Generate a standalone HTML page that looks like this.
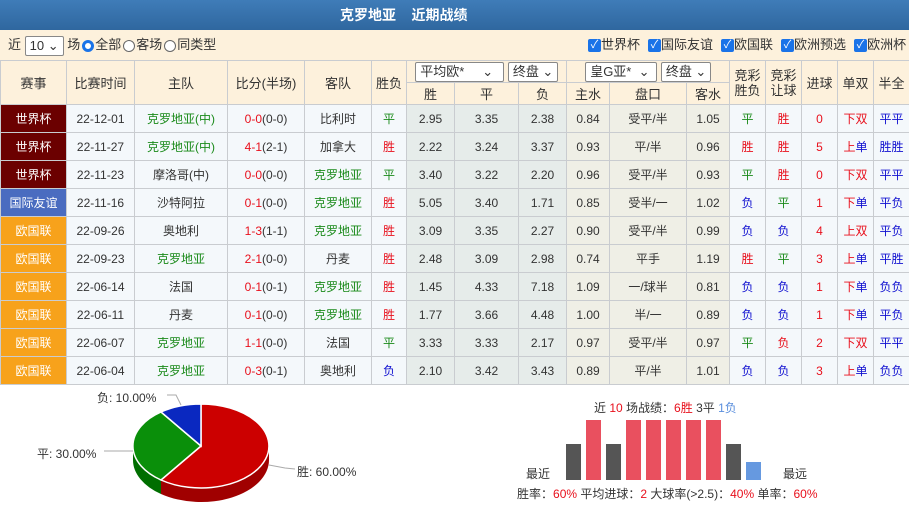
<!DOCTYPE html>
<html><head><meta charset="utf-8"><style>
*{margin:0;padding:0;box-sizing:border-box}
body{width:909px;height:510px;overflow:hidden;background:#fff;font-family:"Liberation Sans","Noto Sans CJK SC",sans-serif;font-size:12px;color:#333;position:relative}
.title{height:30px;background:linear-gradient(#3f7cb8,#2f679f);color:#fff;font-weight:bold;font-size:14px;line-height:30px;padding-left:340px;word-spacing:0}
.filter{height:30px;background:#fdf1dc;line-height:30px;padding-left:8px;font-size:13px;position:relative}
.sel{display:inline-block;border:1px solid #888;border-radius:2px;background:#fff;height:20px;line-height:18px;padding:0 4px;vertical-align:middle;font-size:13px}
.rad{display:inline-block;width:12px;height:12px;border:1px solid #666;border-radius:50%;vertical-align:middle;margin:0 1px 0 2px;background:#fff}
.rad.on{border:3px solid #1a73e8;background:#fff}
.cb{display:inline-block;width:13px;height:13px;background:#1a73e8;border-radius:2px;color:#fff;font-size:11px;line-height:13px;text-align:center;vertical-align:middle;margin-left:8px}
table{position:absolute;left:0;top:60px;border-collapse:collapse;table-layout:fixed;width:909px}
td{border:1px solid #c9ccd0;text-align:center;height:28px;font-size:12px;white-space:nowrap;overflow:hidden}
tr.h td{background:#fdf1dc;height:22px;font-size:13px;color:#333}
tr.d td{background:#f4f8fb}
td.o{background:#e6ecea!important}
td.a{background:#efefe6!important}
.wc{background:#6b0000!important;color:#fff}
.fr{background:#4a6cc0!important;color:#fff}
.ne{background:#f7a21b!important;color:#fff}
.g{color:#1a8a1a}.r{color:#e8101c}.b{color:#1010d0}
.hs{display:inline-block;border:1px solid #888;background:#fff;height:20px;line-height:18px;font-size:13px;text-align:left;padding-left:4px;border-radius:2px;vertical-align:middle}
.t{position:absolute;font-size:12px;color:#333;white-space:nowrap}
.bar{position:absolute;width:15px}
</style></head><body>
<div class="title">克罗地亚&nbsp;&nbsp;&nbsp;&nbsp;近期战绩</div>
<div class="filter">近 <span class="sel">10 ⌄</span> 场<span class="rad on"></span>全部<span class="rad"></span>客场<span class="rad"></span>同类型
<span style="position:absolute;left:580px;top:0"><span class="cb">✓</span>世界杯<span class="cb">✓</span>国际友谊<span class="cb">✓</span>欧国联<span class="cb">✓</span>欧洲预选<span class="cb">✓</span>欧洲杯</span></div>
<table>
<colgroup><col style="width:66px"><col style="width:68px"><col style="width:93px"><col style="width:77px"><col style="width:67px"><col style="width:35px"><col style="width:48px"><col style="width:64px"><col style="width:48px"><col style="width:43px"><col style="width:77px"><col style="width:43px"><col style="width:36px"><col style="width:36px"><col style="width:36px"><col style="width:36px"><col style="width:36px"></colgroup>
<tr class="h"><td rowspan="2">赛事</td><td rowspan="2">比赛时间</td><td rowspan="2">主队</td><td rowspan="2">比分(半场)</td><td rowspan="2">客队</td><td rowspan="2">胜负</td><td colspan="3"><span class="hs" style="width:89px">平均欧* &nbsp;&nbsp;&nbsp;&nbsp;⌄</span> <span class="hs" style="width:50px">终盘 ⌄</span></td><td colspan="3"><span class="hs" style="width:72px">皇G亚* &nbsp;⌄</span> <span class="hs" style="width:50px">终盘 ⌄</span></td><td rowspan="2" style="line-height:15px">竞彩<br>胜负</td><td rowspan="2" style="line-height:15px">竞彩<br>让球</td><td rowspan="2">进球</td><td rowspan="2">单双</td><td rowspan="2">半全</td></tr>
<tr class="h"><td>胜</td><td>平</td><td>负</td><td>主水</td><td>盘口</td><td>客水</td></tr>
<tr class="d"><td class="wc">世界杯</td><td>22-12-01</td><td class="g">克罗地亚(中)</td><td><span class="r">0-0</span>(0-0)</td><td>比利时</td><td class="g">平</td><td class="o">2.95</td><td class="o">3.35</td><td class="o">2.38</td><td class="a">0.84</td><td class="a">受平/半</td><td class="a">1.05</td><td class="g">平</td><td class="r">胜</td><td class="r">0</td><td class="r">下双</td><td class="b">平平</td></tr>
<tr class="d"><td class="wc">世界杯</td><td>22-11-27</td><td class="g">克罗地亚(中)</td><td><span class="r">4-1</span>(2-1)</td><td>加拿大</td><td class="r">胜</td><td class="o">2.22</td><td class="o">3.24</td><td class="o">3.37</td><td class="a">0.93</td><td class="a">平/半</td><td class="a">0.96</td><td class="r">胜</td><td class="r">胜</td><td class="r">5</td><td><span class="r">上</span><span class="b">单</span></td><td class="b">胜胜</td></tr>
<tr class="d"><td class="wc">世界杯</td><td>22-11-23</td><td>摩洛哥(中)</td><td><span class="r">0-0</span>(0-0)</td><td class="g">克罗地亚</td><td class="g">平</td><td class="o">3.40</td><td class="o">3.22</td><td class="o">2.20</td><td class="a">0.96</td><td class="a">受平/半</td><td class="a">0.93</td><td class="g">平</td><td class="r">胜</td><td class="r">0</td><td class="r">下双</td><td class="b">平平</td></tr>
<tr class="d"><td class="fr">国际友谊</td><td>22-11-16</td><td>沙特阿拉</td><td><span class="r">0-1</span>(0-0)</td><td class="g">克罗地亚</td><td class="r">胜</td><td class="o">5.05</td><td class="o">3.40</td><td class="o">1.71</td><td class="a">0.85</td><td class="a">受半/一</td><td class="a">1.02</td><td class="b">负</td><td class="g">平</td><td class="r">1</td><td><span class="r">下</span><span class="b">单</span></td><td class="b">平负</td></tr>
<tr class="d"><td class="ne">欧国联</td><td>22-09-26</td><td>奥地利</td><td><span class="r">1-3</span>(1-1)</td><td class="g">克罗地亚</td><td class="r">胜</td><td class="o">3.09</td><td class="o">3.35</td><td class="o">2.27</td><td class="a">0.90</td><td class="a">受平/半</td><td class="a">0.99</td><td class="b">负</td><td class="b">负</td><td class="r">4</td><td class="r">上双</td><td class="b">平负</td></tr>
<tr class="d"><td class="ne">欧国联</td><td>22-09-23</td><td class="g">克罗地亚</td><td><span class="r">2-1</span>(0-0)</td><td>丹麦</td><td class="r">胜</td><td class="o">2.48</td><td class="o">3.09</td><td class="o">2.98</td><td class="a">0.74</td><td class="a">平手</td><td class="a">1.19</td><td class="r">胜</td><td class="g">平</td><td class="r">3</td><td><span class="r">上</span><span class="b">单</span></td><td class="b">平胜</td></tr>
<tr class="d"><td class="ne">欧国联</td><td>22-06-14</td><td>法国</td><td><span class="r">0-1</span>(0-1)</td><td class="g">克罗地亚</td><td class="r">胜</td><td class="o">1.45</td><td class="o">4.33</td><td class="o">7.18</td><td class="a">1.09</td><td class="a">一/球半</td><td class="a">0.81</td><td class="b">负</td><td class="b">负</td><td class="r">1</td><td><span class="r">下</span><span class="b">单</span></td><td class="b">负负</td></tr>
<tr class="d"><td class="ne">欧国联</td><td>22-06-11</td><td>丹麦</td><td><span class="r">0-1</span>(0-0)</td><td class="g">克罗地亚</td><td class="r">胜</td><td class="o">1.77</td><td class="o">3.66</td><td class="o">4.48</td><td class="a">1.00</td><td class="a">半/一</td><td class="a">0.89</td><td class="b">负</td><td class="b">负</td><td class="r">1</td><td><span class="r">下</span><span class="b">单</span></td><td class="b">平负</td></tr>
<tr class="d"><td class="ne">欧国联</td><td>22-06-07</td><td class="g">克罗地亚</td><td><span class="r">1-1</span>(0-0)</td><td>法国</td><td class="g">平</td><td class="o">3.33</td><td class="o">3.33</td><td class="o">2.17</td><td class="a">0.97</td><td class="a">受平/半</td><td class="a">0.97</td><td class="g">平</td><td class="r">负</td><td class="r">2</td><td class="r">下双</td><td class="b">平平</td></tr>
<tr class="d"><td class="ne">欧国联</td><td>22-06-04</td><td class="g">克罗地亚</td><td><span class="r">0-3</span>(0-1)</td><td>奥地利</td><td class="b">负</td><td class="o">2.10</td><td class="o">3.42</td><td class="o">3.43</td><td class="a">0.89</td><td class="a">平/半</td><td class="a">1.01</td><td class="b">负</td><td class="b">负</td><td class="r">3</td><td><span class="r">上</span><span class="b">单</span></td><td class="b">负负</td></tr>
</table>

<svg style="position:absolute;left:0;top:0" width="909" height="510">
<path d="M269,446 A68,42 0 0,1 161,480 L161,494 A68,42 0 0,0 269,460 Z" fill="#a00000"/>
<path d="M161,480 A68,42 0 0,1 133,446 L133,460 A68,42 0 0,0 161,494 Z" fill="#006e00"/>
<path d="M201,446 L201,404 A68,42 0 1,1 161,480 Z" fill="#cc0000" stroke="#fff" stroke-width="1.5"/>
<path d="M201,446 L161,480 A68,42 0 0,1 161,412 Z" fill="#0a8f0a" stroke="#fff" stroke-width="1.5"/>
<path d="M201,446 L161,412 A68,42 0 0,1 201,404 Z" fill="#0a28c0" stroke="#fff" stroke-width="1.5"/>
<path d="M167,395 L176,395 L181,405" stroke="#aaa" fill="none"/>
<path d="M104,451 L133,451" stroke="#aaa" fill="none"/>
<path d="M269,465 L285,468 L295,469" stroke="#aaa" fill="none"/>
</svg>
<div class="t" style="left:97px;top:389px">负: 10.00%</div>
<div class="t" style="left:37px;top:445px">平: 30.00%</div>
<div class="t" style="left:297px;top:463px">胜: 60.00%</div>

<div class="t" style="left:594px;top:399px">近 <span class="r">10</span> 场战绩：<span class="r">6胜</span> 3平 <span style="color:#5b8fdd">1负</span></div>
<div class="bar" style="left:566px;top:444px;height:36px;background:#555"></div>
<div class="bar" style="left:586px;top:420px;height:60px;background:#e9505f"></div>
<div class="bar" style="left:606px;top:444px;height:36px;background:#555"></div>
<div class="bar" style="left:626px;top:420px;height:60px;background:#e9505f"></div>
<div class="bar" style="left:646px;top:420px;height:60px;background:#e9505f"></div>
<div class="bar" style="left:666px;top:420px;height:60px;background:#e9505f"></div>
<div class="bar" style="left:686px;top:420px;height:60px;background:#e9505f"></div>
<div class="bar" style="left:706px;top:420px;height:60px;background:#e9505f"></div>
<div class="bar" style="left:726px;top:444px;height:36px;background:#555"></div>
<div class="bar" style="left:746px;top:462px;height:18px;background:#6699e0"></div>
<div class="t" style="left:526px;top:465px">最近</div>
<div class="t" style="left:783px;top:465px">最远</div>
<div class="t" style="left:517px;top:485px">胜率：<span class="r">60%</span> 平均进球：<span class="r">2</span> 大球率(&gt;2.5)：<span class="r">40%</span> 单率：<span class="r">60%</span></div>
</body></html>
